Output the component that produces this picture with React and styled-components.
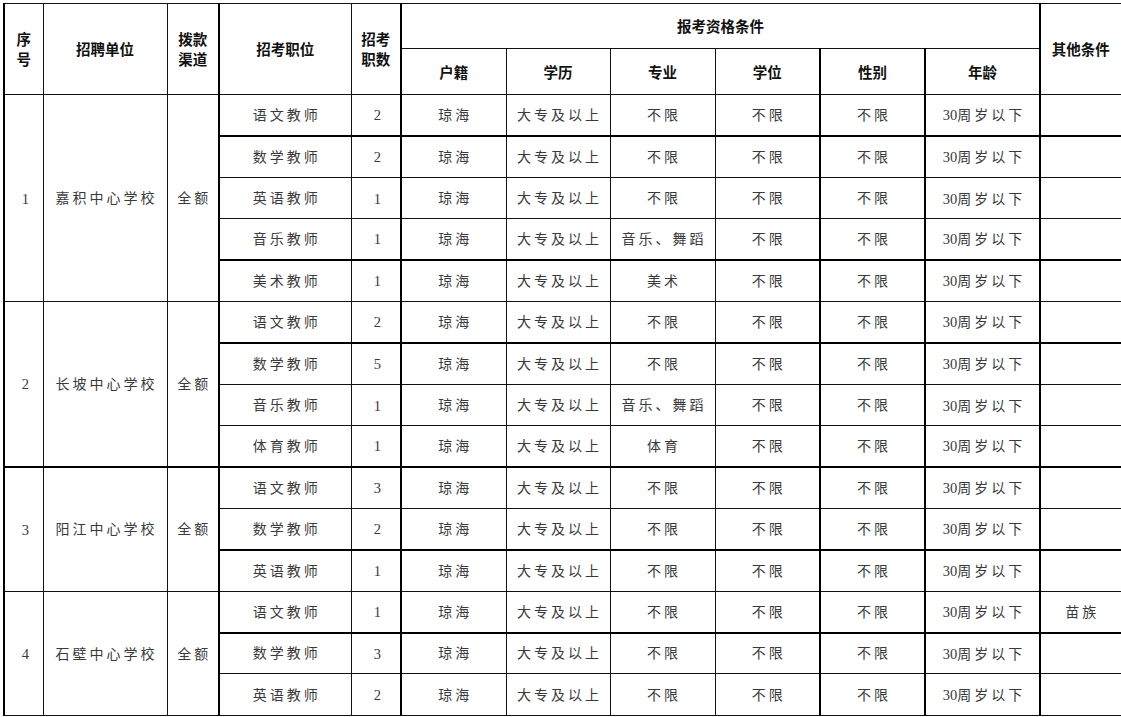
import React from "react";
import styled, { createGlobalStyle, css } from "styled-components";

const Global = createGlobalStyle`
  html, body { margin: 0; padding: 0; background: #fff; }
  body { font-family: "Liberation Serif", "Noto Sans CJK SC", serif; }
`;

const Page = styled.div`
  padding: 3px 0 0 3px;
  width: 1121px;
  height: 717px;
  box-sizing: border-box;
  overflow: hidden;
`;

const Sheet = styled.table`
  border-collapse: collapse;
  table-layout: fixed;
  width: 1116px;
  border-left: 2px solid #000;
  border-top: 1px solid #000;
  border-right: 1px solid #000;
`;

const Row = styled.tr`
  height: ${(p) => p.$h}px;
`;

const edge = css`
  border: 1px solid #111;
  ${(p) => p.$thickLeft && css`border-left: 2px solid #000;`}
  ${(p) => p.$thickBottom && css`border-bottom: 2px solid #000;`}
`;

const HeadCell = styled.th`
  ${edge}
  font-family: "Noto Sans CJK SC", sans-serif;
  font-weight: 700;
  font-size: 14.5px;
  line-height: 20px;
  color: #111;
  text-align: center;
  vertical-align: middle;
  padding: 0;
`;

const Cell = styled.td`
  ${edge}
  font-family: "Liberation Serif", "Noto Sans CJK SC", serif;
  font-size: 14px;
  line-height: 18px;
  color: #3a3a3a;
  letter-spacing: 3px;
  padding: 2px 0 0 3px;
  text-align: center;
  vertical-align: middle;
  white-space: nowrap;
`;

const Num = styled.span`
  letter-spacing: 0;
  font-size: 14.5px;
`;

const widths = [39, 124, 52, 132, 50, 105, 104, 105, 105, 105, 115, 81];
const thickRows = new Set([0, 3, 5, 8, 10, 12]);
const lines = [95, 136, 178, 219, 260, 302, 343, 385, 426, 467, 509, 550, 592, 633, 674, 716];

const groups = [
  {
    no: "1",
    unit: "嘉积中心学校",
    rows: [
      ["语文教师", "2", "不限", ""],
      ["数学教师", "2", "不限", ""],
      ["英语教师", "1", "不限", ""],
      ["音乐教师", "1", "音乐、舞蹈", ""],
      ["美术教师", "1", "美术", ""],
    ],
  },
  {
    no: "2",
    unit: "长坡中心学校",
    rows: [
      ["语文教师", "2", "不限", ""],
      ["数学教师", "5", "不限", ""],
      ["音乐教师", "1", "音乐、舞蹈", ""],
      ["体育教师", "1", "体育", ""],
    ],
  },
  {
    no: "3",
    unit: "阳江中心学校",
    rows: [
      ["语文教师", "3", "不限", ""],
      ["数学教师", "2", "不限", ""],
      ["英语教师", "1", "不限", ""],
    ],
  },
  {
    no: "4",
    unit: "石壁中心学校",
    rows: [
      ["语文教师", "1", "不限", "苗族"],
      ["数学教师", "3", "不限", ""],
      ["英语教师", "2", "不限", ""],
    ],
  },
];

export default function App() {
  let idx = 0;
  const bodyRows = [];
  groups.forEach((g) => {
    const lastIdx = idx + g.rows.length - 1;
    const groupThick = thickRows.has(lastIdx);
    g.rows.forEach((r, i) => {
      const tb = thickRows.has(idx);
      bodyRows.push(
        <Row key={idx} $h={lines[idx + 1] - lines[idx]}>
          {i === 0 && (
            <>
              <Cell rowSpan={g.rows.length} $thickBottom={groupThick}><Num>{g.no}</Num></Cell>
              <Cell rowSpan={g.rows.length} $thickBottom={groupThick}>{g.unit}</Cell>
              <Cell rowSpan={g.rows.length} $thickBottom={groupThick}>全额</Cell>
            </>
          )}
          <Cell $thickLeft $thickBottom={tb}>{r[0]}</Cell>
          <Cell $thickBottom={tb}><Num>{r[1]}</Num></Cell>
          <Cell $thickLeft $thickBottom={tb}>琼海</Cell>
          <Cell $thickBottom={tb}>大专及以上</Cell>
          <Cell $thickBottom={tb}>{r[2]}</Cell>
          <Cell $thickBottom={tb}>不限</Cell>
          <Cell $thickLeft $thickBottom={tb}>不限</Cell>
          <Cell $thickLeft $thickBottom={tb}><Num>30</Num>周岁以下</Cell>
          <Cell $thickLeft $thickBottom={tb}>{r[3]}</Cell>
        </Row>
      );
      idx += 1;
    });
  });

  return (
    <Page>
      <Global />
      <Sheet>
        <colgroup>
          {widths.map((w, i) => (
            <col key={i} style={{ width: w }} />
          ))}
        </colgroup>
        <thead>
          <Row $h={45}>
            <HeadCell rowSpan={2}>序<br />号</HeadCell>
            <HeadCell rowSpan={2}>招聘单位</HeadCell>
            <HeadCell rowSpan={2}>拨款<br />渠道</HeadCell>
            <HeadCell rowSpan={2} $thickLeft>招考职位</HeadCell>
            <HeadCell rowSpan={2}>招考<br />职数</HeadCell>
            <HeadCell colSpan={6} $thickLeft>报考资格条件</HeadCell>
            <HeadCell rowSpan={2} $thickLeft>其他条件</HeadCell>
          </Row>
          <Row $h={46}>
            <HeadCell $thickLeft>户籍</HeadCell>
            <HeadCell>学历</HeadCell>
            <HeadCell>专业</HeadCell>
            <HeadCell>学位</HeadCell>
            <HeadCell $thickLeft>性别</HeadCell>
            <HeadCell $thickLeft>年龄</HeadCell>
          </Row>
        </thead>
        <tbody>{bodyRows}</tbody>
      </Sheet>
    </Page>
  );
}
